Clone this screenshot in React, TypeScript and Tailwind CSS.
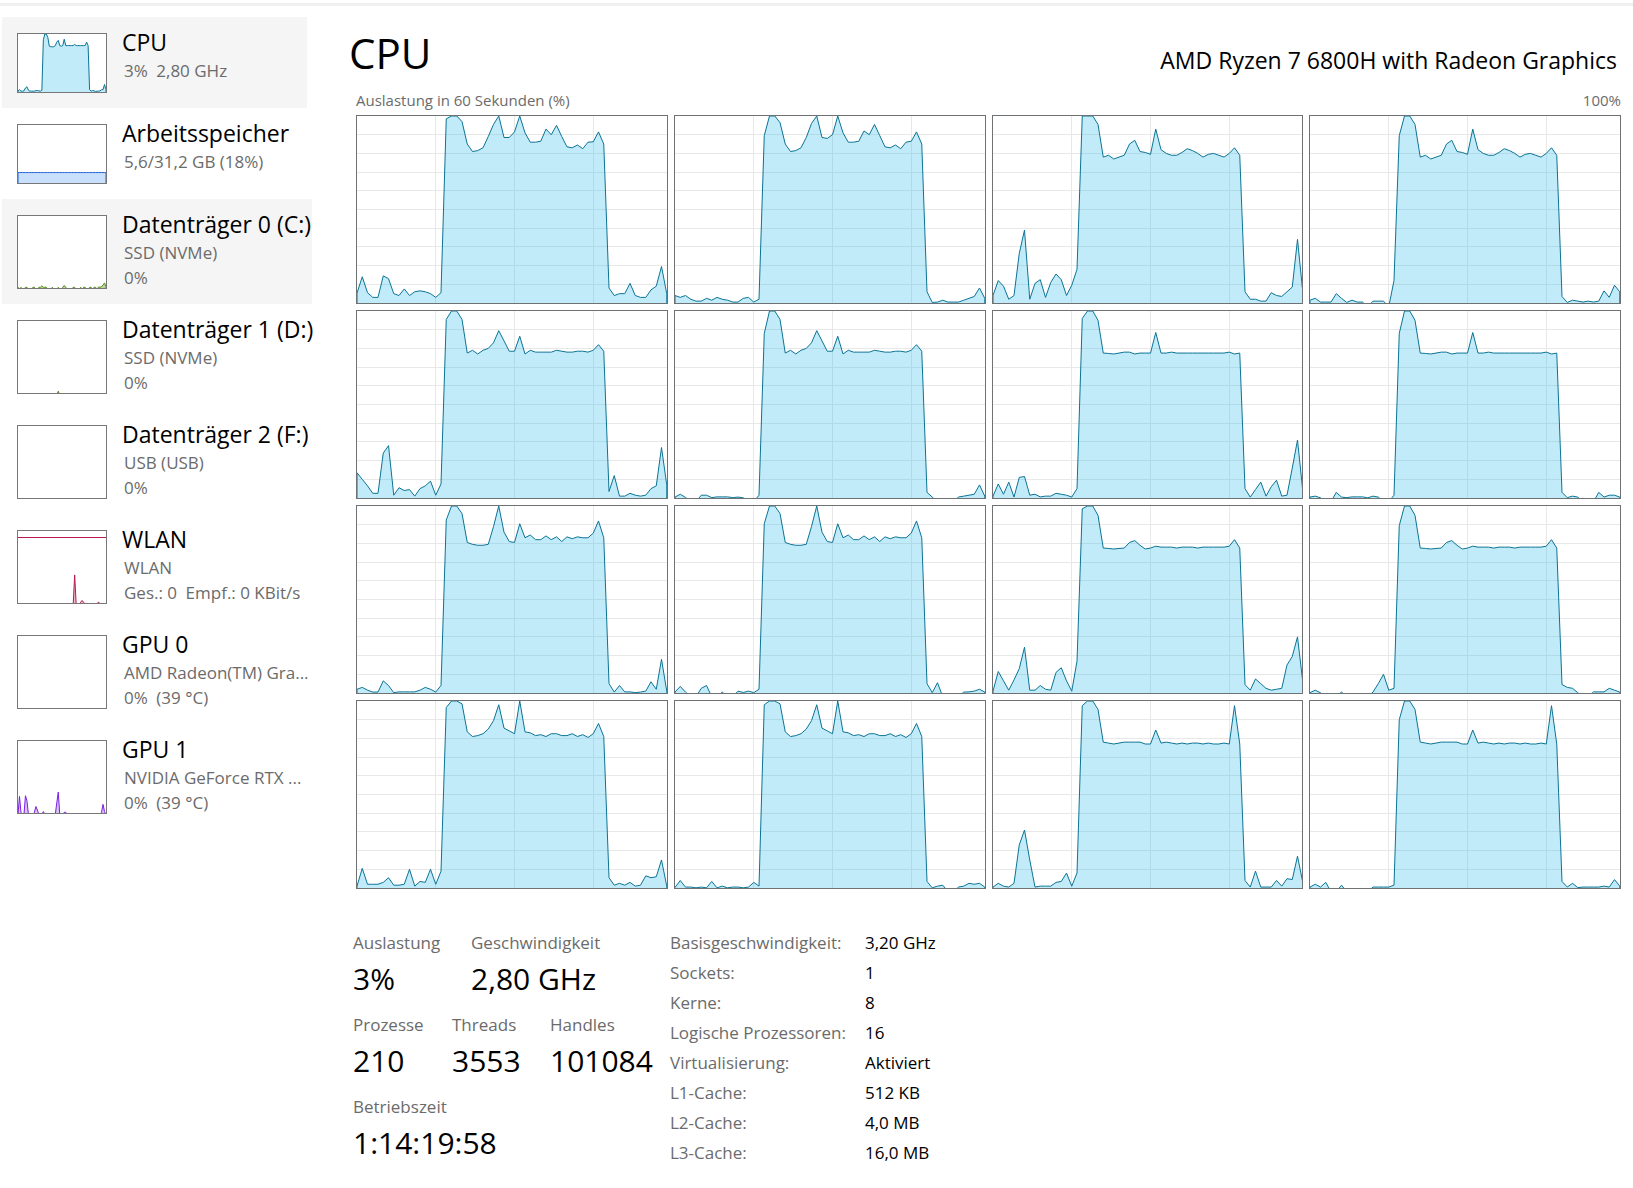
import clsx from "clsx";

const SAMPLES = 60;

const plateauA1 = [100, 100, 97, 85, 81, 81.5, 83, 89, 95.5, 100, 88.5, 88.5, 91.5, 100, 91, 86, 86, 86.5, 93, 90, 95, 89, 83.5, 83, 84.5, 82.5, 86, 86.2, 91.5, 85];
const plateauA2 = [100, 100, 96.5, 85, 81, 81.5, 83, 88.5, 96, 100, 88.5, 88, 90, 100, 91, 86, 86, 86.5, 92, 90, 95.5, 89.5, 83.5, 83, 84.5, 82.5, 86, 86.5, 91.5, 85];
const plateauB = [100, 100, 95.5, 78, 79, 77, 78, 79, 85, 87, 81, 80.5, 79.5, 93, 82, 80, 79, 79, 80.5, 82.5, 81.5, 80, 78, 79.5, 80, 79, 78, 80, 83, 79];
const plateauC = [100, 100, 95.5, 77.5, 79, 77, 79, 80, 83, 89.5, 84, 78.5, 78.5, 86.5, 77, 79, 78, 78, 78, 78, 79, 78.5, 78, 78, 78.5, 78.5, 78, 79, 82, 78.5];
const plateauD = [100, 100, 95, 77.5, 77.3, 77, 77.5, 78, 78, 77, 77.5, 77.5, 77.5, 88.5, 77.5, 77.5, 78, 77.5, 77.5, 77.5, 77.5, 77.5, 77.5, 77.5, 77.5, 77.5, 77.5, 78, 77, 77.5];
const plateauE = [100, 100, 96, 80.5, 79.5, 79, 79, 79.5, 89, 100, 86, 81, 80.5, 90.5, 83, 84.5, 82, 82, 84, 82, 83.5, 81, 83.5, 82.5, 83.5, 83, 83, 85.5, 92, 83];
const plateauF = [100, 100, 95, 77.5, 77.3, 77, 77.3, 77.5, 80.5, 81.5, 79, 77, 77.5, 78.5, 78, 78, 78, 77.5, 78, 78, 78, 77.5, 78, 78, 78, 78, 78, 78.5, 82, 77.5];
const plateauG = [100, 100, 98.5, 83.5, 81, 81.5, 82.5, 85, 89.5, 98, 85.5, 84, 82.5, 100, 83.5, 83, 81.5, 82, 81, 82.5, 82.5, 81.5, 81.5, 82.5, 81, 82, 80.5, 82.5, 88, 81];
const plateauH = [100, 100, 95.5, 78, 77.5, 77, 77.5, 78, 78, 78, 78, 77, 77, 84.5, 77.5, 78, 77.5, 77, 77.5, 77, 77.5, 77.5, 77, 77.5, 77, 77, 77.5, 77, 97.5, 77];

const cores: number[][] = [
  [5.3, 14, 5.5, 3, 3, 14.5, 13, 5, 4, 7.5, 4, 6, 6.5, 6, 5, 3, 5.5, 98.5, ...plateauA1, 8, 4, 5, 5, 10.5, 4, 3, 3, 7, 9, 19.5, 5],
  [4, 3, 4, 2, 1, 1, 2.5, 1.5, 3, 2, 1.5, 0.5, 0.5, 2.5, 3, 0.5, 2, 89.5, ...plateauA2, 6, 0.3, 0.5, 1.5, 0.5, 0.5, 0.5, 1.5, 2.5, 3.5, 8, 2.5],
  [4, 12, 9, 2, 4, 26.5, 39, 2, 10.5, 12.5, 3, 11, 15.5, 12.5, 4, 9.5, 18, 100, ...plateauB, 6, 2, 2, 1, 1, 5.5, 4, 3.5, 6, 8.5, 34, 6],
  [1.5, 2.5, 0.5, 0.5, 0.5, 5, 2.5, 0.3, 1.5, 0.5, 0.5, 0, 1, 1, 1, 0, 12, 89.5, ...plateauB, 3.5, 0.3, 1.5, 1, 0.5, 1, 0.5, 1, 6.5, 3, 9.5, 6],
  [13.5, 10, 6.5, 2.5, 2.5, 24, 28, 1.5, 5.5, 4, 4.5, 1, 5, 6.5, 9, 1.5, 7.5, 95.5, ...plateauC, 3.5, 12, 1, 1, 2.5, 1.5, 1, 1.5, 5, 6.5, 27, 7],
  [0.5, 2, 0.3, 0, 0, 1.5, 1.5, 0.2, 0.6, 0.6, 0.6, 0.2, 0.5, 0.1, 0, 0, 1.5, 88, ...plateauC, 3, 0.5, 0, 0, 0, 0, 0.5, 1, 1.5, 2, 7, 1],
  [1, 7.5, 2, 8.5, 0.5, 11, 11.5, 1.5, 2, 0.6, 1, 1, 2.5, 2, 1.5, 0.5, 5, 96, ...plateauD, 5, 0.5, 4.5, 8.5, 1, 6, 9.5, 1, 1.5, 16, 31, 4],
  [0.5, 1, 0.1, 0, 0, 3, 0.5, 0.2, 0.6, 0.6, 0.6, 0.1, 1, 0.5, 0, 0, 1.5, 88, ...plateauD, 3, 0.2, 1, 0.5, 0, 0, 0, 3, 0.5, 1.5, 1.5, 0.5],
  [2, 3, 1.5, 0.5, 0.5, 6.5, 4, 0.2, 0.6, 0.6, 0.6, 0.6, 1.5, 3, 2, 0.5, 4, 92.5, ...plateauE, 5, 0.5, 4, 0.6, 0.6, 0.2, 0.5, 1, 6, 2, 18, 1],
  [0.5, 3.5, 0.5, 0, 0, 2.5, 4, 0, 0, 0.5, 0, 0, 1, 0.3, 1, 0.2, 2, 90.5, ...plateauE, 5, 0.2, 5.5, 0, 0, 0, 0, 0.5, 0.6, 1, 2, 0.5],
  [1, 11.5, 6.5, 1.5, 7, 13, 24.5, 1.5, 1.5, 4, 2, 1.5, 11, 13.5, 6.5, 1, 17, 98.5, ...plateauF, 4.5, 1.5, 7.5, 5, 2.5, 1.5, 2, 2.5, 15, 19.5, 30, 6],
  [0.2, 1.5, 0.1, 0, 0, 0, 0.5, 0, 0, 0, 0, 0, 0.5, 5, 10, 1.5, 2.5, 89.5, ...plateauF, 4.5, 3, 2.5, 0.2, 0, 0, 0.6, 0.6, 0.6, 2.5, 1.5, 0.5],
  [1, 10.5, 2, 2, 2, 3, 5.5, 1.5, 1.5, 2, 10, 1, 3.5, 3, 10, 2, 9, 96.5, ...plateauG, 5.5, 1.5, 2.5, 1.5, 3, 1, 1.5, 6.5, 5.5, 6, 15, 1],
  [0.3, 4, 0.5, 0.5, 0.1, 0.5, 0.1, 3.5, 0.1, 1, 0.1, 0.5, 0.5, 0.1, 0.5, 3, 1, 98, ...plateauG, 3.5, 0.1, 1, 1.5, 0, 0, 0.5, 1, 2.5, 2, 2.5, 0.5],
  [0.5, 2.5, 1, 0.5, 2.5, 23, 31, 15, 0.5, 1, 1, 1, 3, 3.5, 8, 1, 8, 97.5, ...plateauH, 4, 0.5, 9, 0.5, 0.5, 0.5, 4, 1, 5, 4.5, 17, 3],
  [0.5, 2, 0.5, 3, 0, 0, 1.5, 0, 0, 0, 0, 0, 0.5, 0.5, 0.5, 0.5, 1.5, 90, ...plateauH, 3.5, 0.5, 2.5, 0.2, 0.5, 0.5, 0.5, 0.5, 1, 0.5, 4.5, 1],
];

// Mostly idle history with a few spikes, keyed by sample index.
function spikes(values: Record<number, number>) {
  return Array.from({ length: SAMPLES }, (_, i) => values[i] ?? 0);
}

const cpuHistory = [2, 4, 1.5, 1.5, 2, 7, 9, 3, 1.5, 1.5, 1.5, 1.5, 2.5, 2.5, 2, 1.5, 3, 90, 100, 100, 94, 79, 78, 78, 78, 80, 86, 89, 80, 79, 80, 91, 80, 80, 80, 80, 80, 80, 82, 80, 80, 80, 80, 80, 80, 80, 86, 80, 4, 1.5, 2.5, 2, 1, 1.5, 1.5, 2, 4, 4, 13, 4];

type Resource = {
  name: string;
  lines: string[];
  stroke: string;
  fill: string;
  history: number[];
  limit?: number;
  background?: string;
};

const resources: Resource[] = [
  {
    name: "CPU",
    lines: ["3%\u20022,80 GHz"],
    stroke: "#0b7494",
    fill: "#c2ebfa",
    history: cpuHistory,
    background: "bg-[#f5f5f5]",
  },
  {
    name: "Arbeitsspeicher",
    lines: ["5,6/31,2 GB (18%)"],
    stroke: "#1f62d0",
    fill: "#c8dffd",
    history: Array(SAMPLES).fill(18),
  },
  {
    name: "Datenträger 0 (C:)",
    lines: ["SSD (NVMe)", "0%"],
    stroke: "#57881e",
    fill: "#bcd69a",
    history: spikes({ 0: 1, 2: 1, 5: 1, 6: 1, 10: 1, 11: 1, 14: 1, 15: 1, 16: 3, 17: 1, 18: 1, 19: 1, 23: 1, 27: 1, 30: 1, 31: 3.5, 32: 1, 37: 1, 38: 1, 42: 1, 44: 1, 45: 1, 48: 1, 49: 1, 51: 1, 52: 1, 54: 1.5, 55: 1, 56: 2, 57: 4, 58: 7, 59: 2 }),
    background: "bg-[#f5f5f5]",
  },
  {
    name: "Datenträger 1 (D:)",
    lines: ["SSD (NVMe)", "0%"],
    stroke: "#57881e",
    fill: "#bcd69a",
    history: spikes({ 27: 2.5 }),
  },
  {
    name: "Datenträger 2 (F:)",
    lines: ["USB (USB)", "0%"],
    stroke: "#57881e",
    fill: "#bcd69a",
    history: [],
  },
  {
    name: "WLAN",
    lines: ["WLAN", "Ges.: 0\u2002Empf.: 0 KBit/s"],
    stroke: "#b8174f",
    fill: "#eab9cb",
    history: spikes({ 38: 39, 42: 1, 43: 3.5, 44: 1, 54: 1.5 }),
    limit: 91,
  },
  {
    name: "GPU 0",
    lines: ["AMD Radeon(TM) Gra...", "0%\u2002(39 °C)"],
    stroke: "#7a1fe0",
    fill: "#d9c2f5",
    history: [],
  },
  {
    name: "GPU 1",
    lines: ["NVIDIA GeForce RTX ...", "0%\u2002(39 °C)"],
    stroke: "#7a1fe0",
    fill: "#d9c2f5",
    history: spikes({ 1: 23, 2: 1, 5: 24, 6: 17, 11: 1, 12: 9, 13: 4, 17: 2, 26: 14, 27: 29, 31: 1, 32: 1, 56: 1, 57: 12, 58: 2 }),
  },
];

const details = [
  ["Basisgeschwindigkeit:", "3,20 GHz"],
  ["Sockets:", "1"],
  ["Kerne:", "8"],
  ["Logische Prozessoren:", "16"],
  ["Virtualisierung:", "Aktiviert"],
  ["L1-Cache:", "512 KB"],
  ["L2-Cache:", "4,0 MB"],
  ["L3-Cache:", "16,0 MB"],
];

type GraphProps = {
  data: number[];
  stroke: string;
  fill: string;
  fillOpacity?: number;
  grid?: boolean;
  limit?: number;
};

function Graph({ data, stroke, fill, fillOpacity = 1, grid, limit }: GraphProps) {
  const last = SAMPLES - 1;
  // Idle samples drop just below the frame so no line is drawn along the bottom.
  const points = data.map((value, i) => `${i},${value > 0 ? 100 - value : 102}`).join(" ");

  return (
    <svg viewBox={`0 0 ${last} 100`} preserveAspectRatio="none" className="block w-full h-full overflow-hidden" aria-hidden="true">
      {grid && (
        <g stroke="#e8e8e8" shapeRendering="crispEdges">
          {[10, 20, 30, 40, 50, 60, 70, 80, 90].map((y) => (
            <line key={y} x1="0" x2={last} y1={y} y2={y} vectorEffect="non-scaling-stroke" />
          ))}
          {[15, 30, 45].map((x) => (
            <line key={x} x1={x} x2={x} y1="0" y2="100" vectorEffect="non-scaling-stroke" />
          ))}
        </g>
      )}
      {data.length > 0 && (
        <polygon
          points={`0,104 ${points} ${last},104`}
          fill={fill}
          fillOpacity={fillOpacity}
          stroke={stroke}
          vectorEffect="non-scaling-stroke"
        />
      )}
      {limit && (
        <line
          x1="0"
          x2={last}
          y1={100 - limit}
          y2={100 - limit}
          stroke={stroke}
          shapeRendering="crispEdges"
          vectorEffect="non-scaling-stroke"
        />
      )}
    </svg>
  );
}

function ResourceItem({ resource }: { resource: Resource }) {
  const tall = resource.lines.length > 1;

  return (
    <li>
      <button
        type="button"
        className={clsx("flex items-start text-left pl-[15px]", tall ? "w-[310px] h-[105px]" : "w-[305px] h-[91px]", resource.background)}
      >
        <span className={clsx("block shrink-0 w-[90px] mt-4 border border-[#77777a] bg-white", tall ? "h-[74px]" : "h-[60px]")}>
          <Graph data={resource.history} stroke={resource.stroke} fill={resource.fill} limit={resource.limit} />
        </span>
        <span className="block pl-[15px] pt-[9px] whitespace-nowrap">
          <span className="block text-[23px] leading-8 text-black">{resource.name}</span>
          {resource.lines.map((line) => (
            <span key={line} className="block pl-0.5 text-[17px] leading-[25px] text-[#6b6b6b]">
              {line}
            </span>
          ))}
        </span>
      </button>
    </li>
  );
}

function Stat({ label, value, className }: { label: string; value: string; className?: string }) {
  return (
    <div className={className}>
      <dt className="text-[17px] leading-[30px] text-[#6b6b6b]">{label}</dt>
      <dd className="text-[30px] leading-[42px] text-black">{value}</dd>
    </div>
  );
}

export default function App() {
  return (
    <div className="min-h-screen bg-white border-t-3 border-white font-['Open_Sans','Noto_Sans',sans-serif]">
      <div className="border-t-3 border-[#f0f0f0] flex">
        {/* Resource list */}
        <nav className="shrink-0 w-[354px] pl-0.5 pt-[11px]">
          <ul>
            {resources.map((resource) => (
              <ResourceItem key={resource.name} resource={resource} />
            ))}
          </ul>
        </nav>

        <main className="flex-1 min-w-0 pr-3 pt-3">
          <header className="flex items-baseline justify-between pr-1 -ml-1">
            <h1 className="-ml-px text-[42px] leading-[70px] text-black">CPU</h1>
            <p className="text-[23px] text-black">AMD Ryzen 7 6800H with Radeon Graphics</p>
          </header>

          <div className="flex justify-between pl-0.5 pb-0.5 text-[15px] leading-[25px] text-[#6b6b6b]">
            <span>Auslastung in 60 Sekunden (%)</span>
            <span>100%</span>
          </div>

          {/* One graph per logical processor */}
          <div className="grid grid-cols-4 gap-1.5 pl-0.5">
            {cores.map((core, i) => (
              <div key={i} className="h-[189px] border border-[#6e7275]">
                <Graph data={core} stroke="#0b7494" fill="#14b2ec" fillOpacity={0.26} grid />
              </div>
            ))}
          </div>

          <div className="flex pt-[39px] -ml-px">
            <dl className="w-[317px]">
              <div className="flex pb-2.5">
                <Stat label="Auslastung" value="3%" className="w-[118px]" />
                <Stat label="Geschwindigkeit" value="2,80 GHz" />
              </div>
              <div className="flex pb-2.5">
                <Stat label="Prozesse" value="210" className="w-[99px]" />
                <Stat label="Threads" value="3553" className="w-[98px]" />
                <Stat label="Handles" value="101084" />
              </div>
              <Stat label="Betriebszeit" value="1:14:19:58" />
            </dl>
            <dl className="text-[17px] leading-[30px]">
              {details.map(([label, value]) => (
                <div key={label} className="flex">
                  <dt className="w-[195px] text-[#6b6b6b]">{label}</dt>
                  <dd className="text-black">{value}</dd>
                </div>
              ))}
            </dl>
          </div>
        </main>
      </div>
    </div>
  );
}
